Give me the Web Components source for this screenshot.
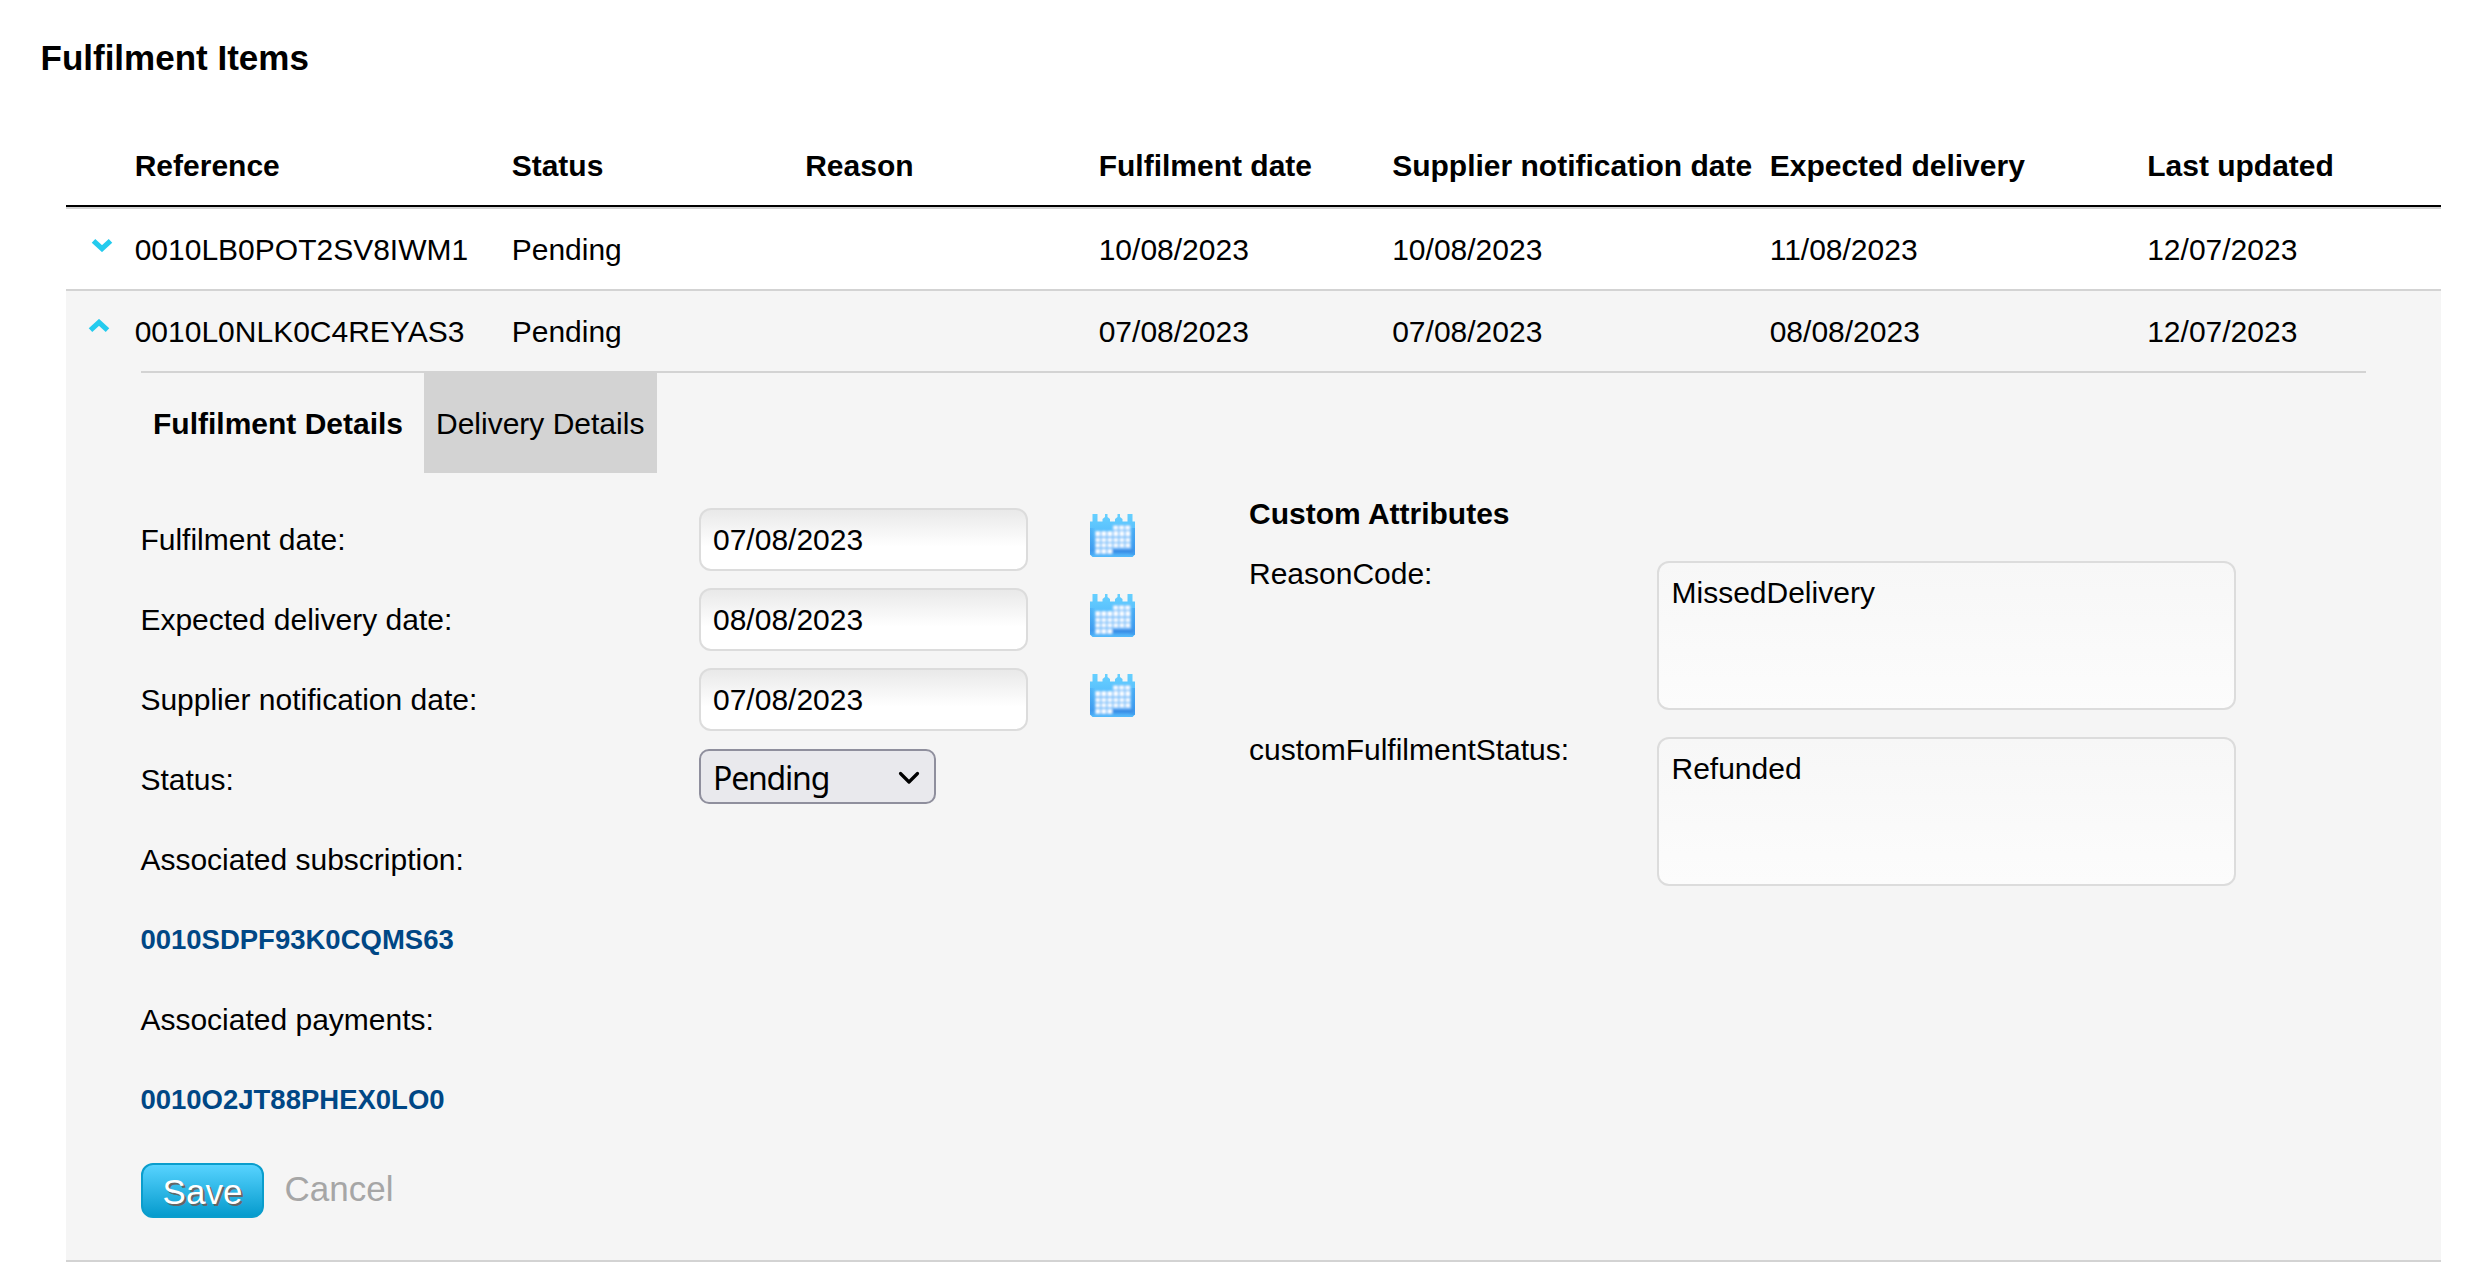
<!DOCTYPE html>
<html lang="en">
<head>
<meta charset="utf-8">
<title>Fulfilment Items</title>
<style>
html, body { margin: 0; background: #fff; }
body { font-family: "Liberation Sans", Arial, sans-serif; font-size: 30px; color: #000; overflow: hidden; }
</style>
</head>
<body>
<fulfilment-page></fulfilment-page>
<script>
const define = (name, html) => customElements.define(name, class extends HTMLElement {
  constructor() {
    super();
    const t = document.createElement('template');
    t.innerHTML = html;
    this.attachShadow({ mode: 'open' }).append(t.content.cloneNode(true));
  }
});

define('toggle-chevron', `
<style>
:host { display: block; width: 22px; height: 14px; }
svg { display: block; }
:host([open]) svg { transform: scaleY(-1); }
</style>
<svg width="22" height="14" viewBox="0 0 22 14"><path d="M2.5 2.8 L11 10.6 L19.5 2.8" fill="none" stroke="#24cbee" stroke-width="5.2"/></svg>`);

define('item-row', `
<style>
:host { display: grid; grid-template-columns: 68.7px 377px 293.5px 293.5px 293.5px 377.5px 377.5px 1fr; height: 79px; padding-top: 1px; align-items: center; line-height: 40px; white-space: nowrap; border-bottom: 2px solid #d3d3d3; }
:host([header]) { height: 59px; padding-top: 1px; align-items: start; font-weight: bold; border-bottom: 2px solid #000; }
:host([plain]) { border-bottom: 0; }
.icon { align-self: start; padding: 28px 0 0 25px; }
:host([plain]) .icon { padding: 27px 0 0 22px; }
</style>
<div class="icon"><slot name="toggle"></slot></div><slot></slot>`);

define('calendar-icon', `
<style>:host { display: block; width: 45px; height: 43px; } svg { display: block; overflow: visible; }</style>
<svg width="45" height="43" viewBox="0 0 45 43">
<defs>
<linearGradient id="g" x1="0" y1="0" x2="0" y2="1"><stop offset="0" stop-color="#66d0ff"/><stop offset=".35" stop-color="#5bc2fd"/><stop offset=".85" stop-color="#459ff0"/><stop offset="1" stop-color="#55bbfb"/></linearGradient>
<linearGradient id="h" x1="0" y1="0" x2="1" y2="0"><stop offset="0" stop-color="#2f8de8" stop-opacity=".35"/><stop offset=".12" stop-color="#2f8de8" stop-opacity="0"/><stop offset=".85" stop-color="#2f8de8" stop-opacity="0"/><stop offset="1" stop-color="#2f8de8" stop-opacity=".5"/></linearGradient>
<filter id="s" x="-5%" y="-5%" width="110%" height="110%"><feGaussianBlur stdDeviation=".8"/></filter>
</defs>
<path d="M2.5 0H7.5V7.5H12.5V5L15 3V0H17.5V3L20 5V7.5H25V5L27.5 3V0H30V3L32.5 5V7.5H37.5V0H42.5V7.5H45V40.5L42.5 43H2.5L0 40.5V7.5H2.5Z" fill="url(#g)"/>
<rect y="14" width="45" height="27" fill="url(#h)"/>
<g filter="url(#s)">
<path d="M22.5 35H43V39H22.5Z" fill="#3a90e6"/>
<path d="M22.5 11H41V35H22.5V40.5H5V17H22.5Z" fill="#86c6fb"/>
<g stroke="#fff" fill="none">
<path stroke-width="3.6" stroke-dasharray="4.2 1.8" d="M23.5 13.6H40.5"/>
<path stroke-width="4.8" stroke-dasharray="4.2 1.8" d="M5.7 19.6H40.5"/>
<path stroke-width="3.4" stroke-dasharray="4.2 1.8" d="M5.7 26H40.5M5.7 31.3H40.5"/>
<path stroke-width="4.4" stroke-dasharray="4.2 1.8" d="M5.7 37.4H22"/>
</g></g></svg>`);

define('form-field', `
<style>
:host { display: grid; grid-template-columns: 559px 329px 62px 45px; height: 80px; align-items: center; white-space: nowrap; }
.l { line-height: 40px; padding: 1px 0 0 .4px; }
::slotted([slot=icon]) { grid-column: 4; margin-bottom: 7px; }
</style>
<div class="l"><slot name="label"></slot></div><slot></slot><slot name="icon"></slot>`);

define('text-box', `
<style>
:host { display: block; box-sizing: border-box; width: 329px; height: 63px; border: 2px solid #dcdcdc; border-radius: 12px; background: linear-gradient(#e9e9e9, #fff 62%); padding: 11px 0 0 12px; line-height: 38px; }
:host([area]) { width: 579px; height: 149px; background: linear-gradient(#f7f7f7, #fcfcfc); padding-left: 12.5px; }
</style><slot></slot>`);

define('select-box', `
<style>
:host { display: flex; box-sizing: border-box; width: 237px; height: 55px; border: 2px solid #8f8f9d; border-radius: 10px; background: #e9e9ed; justify-content: space-between; padding: 0 14px 0 12px; font: 32px/53px "Noto Sans", sans-serif; letter-spacing: -1.2px; margin-bottom: 6px; }
svg { margin-top: 20px; }
</style><span><slot></slot></span>
<svg width="22" height="14" viewBox="0 0 22 14"><path d="M2.5 2.5L11 11L19.5 2.5" fill="none" stroke="#000" stroke-width="3.2" stroke-linecap="round" stroke-linejoin="round"/></svg>`);

define('tab-bar', `
<style>
:host { display: flex; height: 100px; border-top: 2px solid #d3d3d3; line-height: 101px; white-space: nowrap; }
::slotted(*) { padding: 0 12px; }
::slotted([active]) { font-weight: bold; width: 259px; }
::slotted([idle]) { background: #d3d3d3; width: 209px; }
</style><slot></slot>`);

define('attribute-row', `
<style>
:host { display: grid; grid-template-columns: 408px 579px; height: 176px; }
.l { line-height: 26px; }
</style><div class="l"><slot name="label"></slot></div><slot></slot>`);

define('ref-link', `
<style>:host { display: block; height: 80px; line-height: 81px; font-size: 27.5px; font-weight: bold; color: #004785; padding-left: .4px; }</style><slot></slot>`);

define('action-bar', `
<style>
:host { display: flex; padding-top: 24px; font-size: 35px; }
.save { box-sizing: border-box; width: 123px; height: 55px; border: 2px solid #0a9dcc; border-radius: 12px; background: linear-gradient(#57d3ff, #069bcd); color: #fff; text-shadow: 2px 2px 0 #666; text-align: center; line-height: 53px; }
.cancel { color: #a6a6a6; margin-left: 20.5px; line-height: 52px; }
</style><div class="save"><slot name="save"></slot></div><div class="cancel"><slot name="cancel"></slot></div>`);

define('item-details', `
<style>
:host { display: block; margin: 0 75px; }
.cols { display: flex; height: 787px; margin-left: -1px; }
.left { width: 1109px; padding-top: 26px; }
action-bar { margin-left: 1px; }
.right { padding-top: 21px; }
h2 { margin: 0; font-size: 30px; line-height: 40px; padding-bottom: 27px; }
</style>
<tab-bar><span active>Fulfilment Details</span><span idle>Delivery Details</span></tab-bar>
<div class="cols">
<div class="left">
<form-field><span slot="label">Fulfilment date:</span><text-box>07/08/2023</text-box><calendar-icon slot="icon"></calendar-icon></form-field>
<form-field><span slot="label">Expected delivery date:</span><text-box>08/08/2023</text-box><calendar-icon slot="icon"></calendar-icon></form-field>
<form-field><span slot="label">Supplier notification date:</span><text-box>07/08/2023</text-box><calendar-icon slot="icon"></calendar-icon></form-field>
<form-field><span slot="label">Status:</span><select-box>Pending</select-box></form-field>
<form-field><span slot="label">Associated subscription:</span></form-field>
<ref-link>0010SDPF93K0CQMS63</ref-link>
<form-field><span slot="label">Associated payments:</span></form-field>
<ref-link>0010O2JT88PHEX0LO0</ref-link>
<action-bar><span slot="save">Save</span><span slot="cancel">Cancel</span></action-bar>
</div>
<div class="right">
<h2>Custom Attributes</h2>
<attribute-row><span slot="label">ReasonCode:</span><text-box area>MissedDelivery</text-box></attribute-row>
<attribute-row><span slot="label">customFulfilmentStatus:</span><text-box area>Refunded</text-box></attribute-row>
</div>
</div>`);

define('fulfilment-page', `
<style>
:host { display: block; padding: 38px 29px 0 0; }
h1 { margin: 0 0 67px 40.5px; font-size: 35px; line-height: 40px; }
.table { margin-left: 66px; }
.first { border-top: 2px solid #d3d3d3; }
.open { background: #f5f5f5; border-bottom: 2px solid #d3d3d3; }
</style>
<h1>Fulfilment Items</h1>
<div class="table">
<item-row header><span>Reference</span><span>Status</span><span>Reason</span><span>Fulfilment date</span><span>Supplier notification date</span><span>Expected delivery</span><span>Last updated</span></item-row>
<div class="first"><item-row><toggle-chevron slot="toggle"></toggle-chevron><span>0010LB0POT2SV8IWM1</span><span>Pending</span><span></span><span>10/08/2023</span><span>10/08/2023</span><span>11/08/2023</span><span>12/07/2023</span></item-row></div>
<div class="open"><item-row plain><toggle-chevron slot="toggle" open></toggle-chevron><span>0010L0NLK0C4REYAS3</span><span>Pending</span><span></span><span>07/08/2023</span><span>07/08/2023</span><span>08/08/2023</span><span>12/07/2023</span></item-row>
<item-details></item-details></div>
</div>`);
</script>
</body>
</html>
